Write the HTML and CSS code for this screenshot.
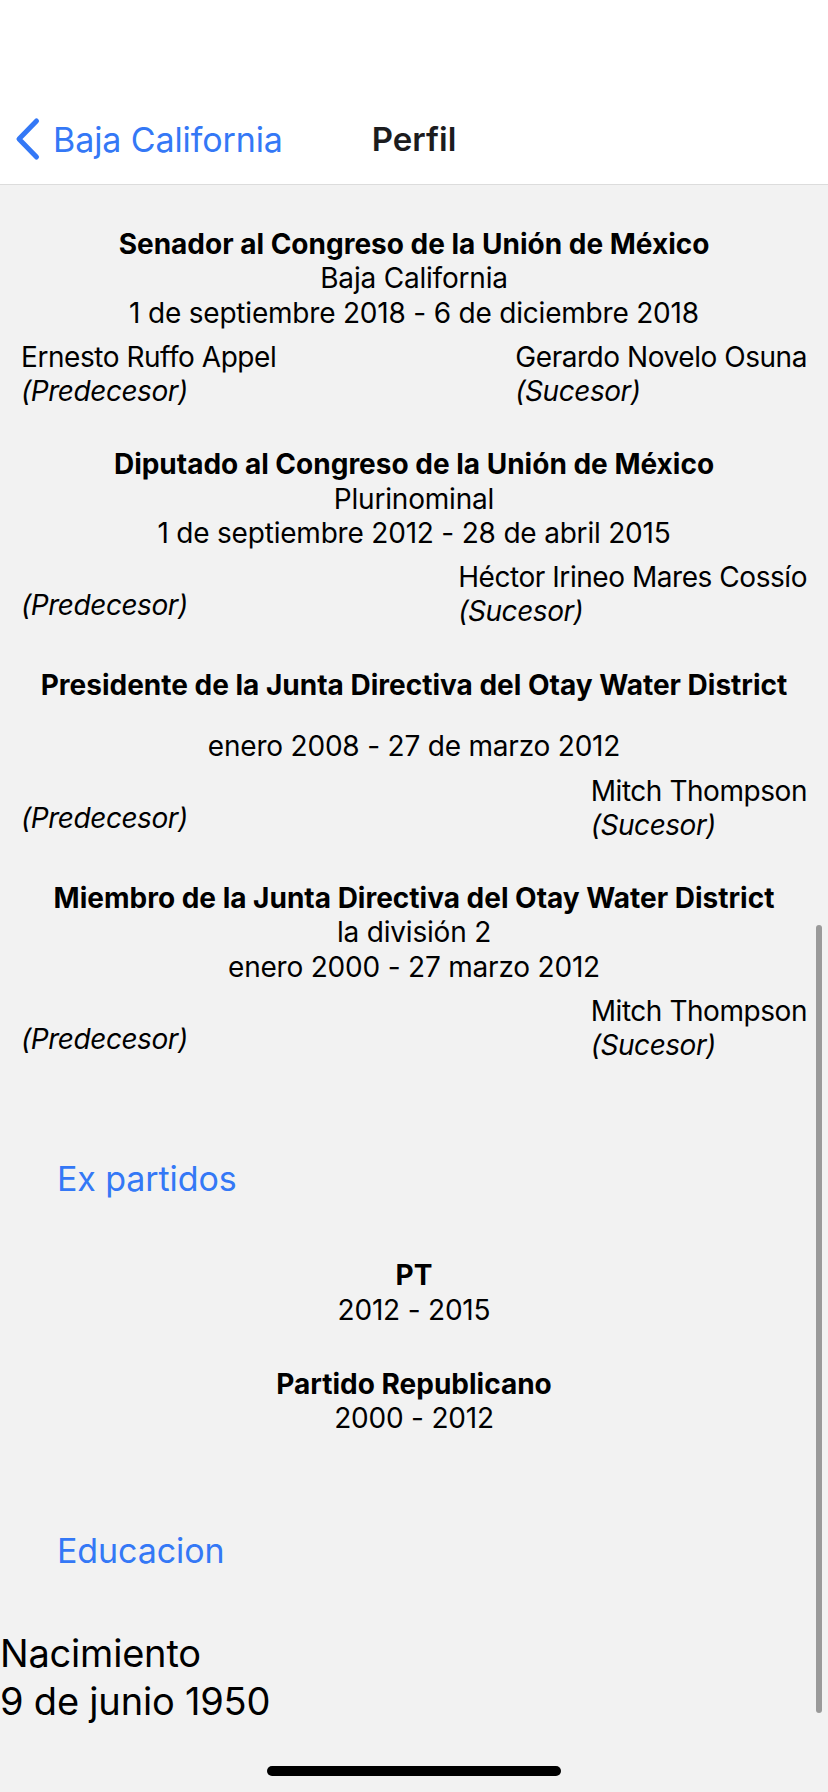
FILE: index.html
```html
<!DOCTYPE html>
<html lang="es">
<head>
<meta charset="utf-8">
<title>Perfil</title>
<link rel="stylesheet" href="styles.css">
</head>
<body>
<div class="screen">
  <header class="nav">
    <a class="back" href="#">
      <svg class="chevron" width="26" height="44" viewBox="0 0 26 44"><path d="M21.5 4 L4 22 L21.5 40" fill="none" stroke="#3478F6" stroke-width="5" stroke-linecap="round" stroke-linejoin="round"/></svg>
      <span class="back-label">Baja California</span>
    </a>
    <h1 class="nav-title">Perfil</h1>
  </header>

  <main class="content">
    <section class="office">
      <div class="o-title">Senador al Congreso de la Unión de México</div>
      <div class="o-line">Baja California</div>
      <div class="o-line">1 de septiembre 2018 - 6 de diciembre 2018</div>
      <div class="succession">
        <div class="person"><div class="name">Ernesto Ruffo Appel</div><div class="role">(Predecesor)</div></div>
        <div class="person"><div class="name">Gerardo Novelo Osuna</div><div class="role">(Sucesor)</div></div>
      </div>
    </section>

    <section class="office">
      <div class="o-title">Diputado al Congreso de la Unión de México</div>
      <div class="o-line">Plurinominal</div>
      <div class="o-line">1 de septiembre 2012 - 28 de abril 2015</div>
      <div class="succession">
        <div class="person"><div class="name empty"></div><div class="role">(Predecesor)</div></div>
        <div class="person"><div class="name">Héctor Irineo Mares Cossío</div><div class="role">(Sucesor)</div></div>
      </div>
    </section>

    <section class="office">
      <div class="o-title">Presidente de la Junta Directiva del Otay Water District</div>
      <div class="o-line empty"></div>
      <div class="o-line">enero 2008 - 27 de marzo 2012</div>
      <div class="succession">
        <div class="person"><div class="name empty"></div><div class="role">(Predecesor)</div></div>
        <div class="person"><div class="name">Mitch Thompson</div><div class="role">(Sucesor)</div></div>
      </div>
    </section>

    <section class="office">
      <div class="o-title">Miembro de la Junta Directiva del Otay Water District</div>
      <div class="o-line">la división 2</div>
      <div class="o-line">enero 2000 - 27 marzo 2012</div>
      <div class="succession">
        <div class="person"><div class="name empty"></div><div class="role">(Predecesor)</div></div>
        <div class="person"><div class="name">Mitch Thompson</div><div class="role">(Sucesor)</div></div>
      </div>
    </section>

    <h2 class="section-link parties-link">Ex partidos</h2>

    <div class="parties">
      <div class="party"><div class="o-title">PT</div><div class="o-line">2012 - 2015</div></div>
      <div class="party"><div class="o-title">Partido Republicano</div><div class="o-line">2000 - 2012</div></div>
    </div>

    <h2 class="section-link edu-link">Educacion</h2>

    <div class="birth">
      <div>Nacimiento</div>
      <div>9 de junio 1950</div>
    </div>
  </main>

  <div class="scrollbar"></div>
  <div class="home-indicator"></div>
</div>
</body>
</html>
```

FILE: styles.css
```css
* { box-sizing: border-box; }

html, body {
  margin: 0;
  padding: 0;
}

body {
  width: 828px;
  height: 1792px;
  overflow: hidden;
  background: #f2f2f2;
  font-family: Inter, "Noto Sans", Roboto, sans-serif;
  color: #000;
}

.screen {
  position: relative;
  width: 828px;
  height: 1792px;
  background: #f2f2f2;
}

.nav {
  height: 185px;
  background: #fff;
  border-bottom: 1px solid #dcdcdc;
  display: flex;
  align-items: flex-start;
  position: relative;
  padding-top: 117px;
}

.back {
  display: flex;
  align-items: center;
  gap: 12px;
  padding-left: 15px;
  height: 44px;
  text-decoration: none;
  color: #3478F6;
  font-size: 34px;
  letter-spacing: -0.1px;
}

.chevron { display: block; }

.nav-title {
  position: absolute;
  left: 0;
  right: 0;
  top: 117px;
  height: 44px;
  margin: 0;
  text-align: center;
  font-size: 33px;
  line-height: 44px;
  font-weight: 600;
  color: #1c1c1e;
}

.content {
  padding-top: 42px;
}

.office {
  margin-bottom: 39px;
}

.o-title {
  text-align: center;
  font-weight: 700;
  font-size: 28px;
  line-height: 34.25px;
  letter-spacing: 0;
}

.o-line {
  text-align: center;
  font-size: 28px;
  line-height: 34.25px;
  letter-spacing: -0.2px;
}

.o-line.empty { height: 27.7px; }

.succession {
  display: flex;
  justify-content: space-between;
  align-items: center;
  padding: 0 21px;
  margin-top: 10px;
}

.name, .role {
  font-size: 28px;
  line-height: 34.25px;
  letter-spacing: -0.45px;
}

.name.empty { height: 21px; }

.role { font-style: italic; }

.section-link {
  margin: 0;
  padding-left: 57px;
  font-weight: 400;
  font-size: 34px;
  line-height: 42px;
  color: #3478F6;
  letter-spacing: -0.1px;
}

.parties-link { margin-top: 96px; }

.parties {
  margin-top: 58px;
  display: flex;
  flex-direction: column;
  gap: 40px;
}

.edu-link { margin-top: 95px; }

.birth {
  margin-top: 57px;
  font-size: 38px;
  line-height: 48px;
  letter-spacing: -0.2px;
}

.scrollbar {
  position: absolute;
  left: 816px;
  top: 925px;
  width: 6px;
  height: 788px;
  border-radius: 3px;
  background: #9a9a9a;
}

.home-indicator {
  position: absolute;
  left: 267px;
  top: 1766px;
  width: 294px;
  height: 10px;
  border-radius: 5px;
  background: #000;
}
```
